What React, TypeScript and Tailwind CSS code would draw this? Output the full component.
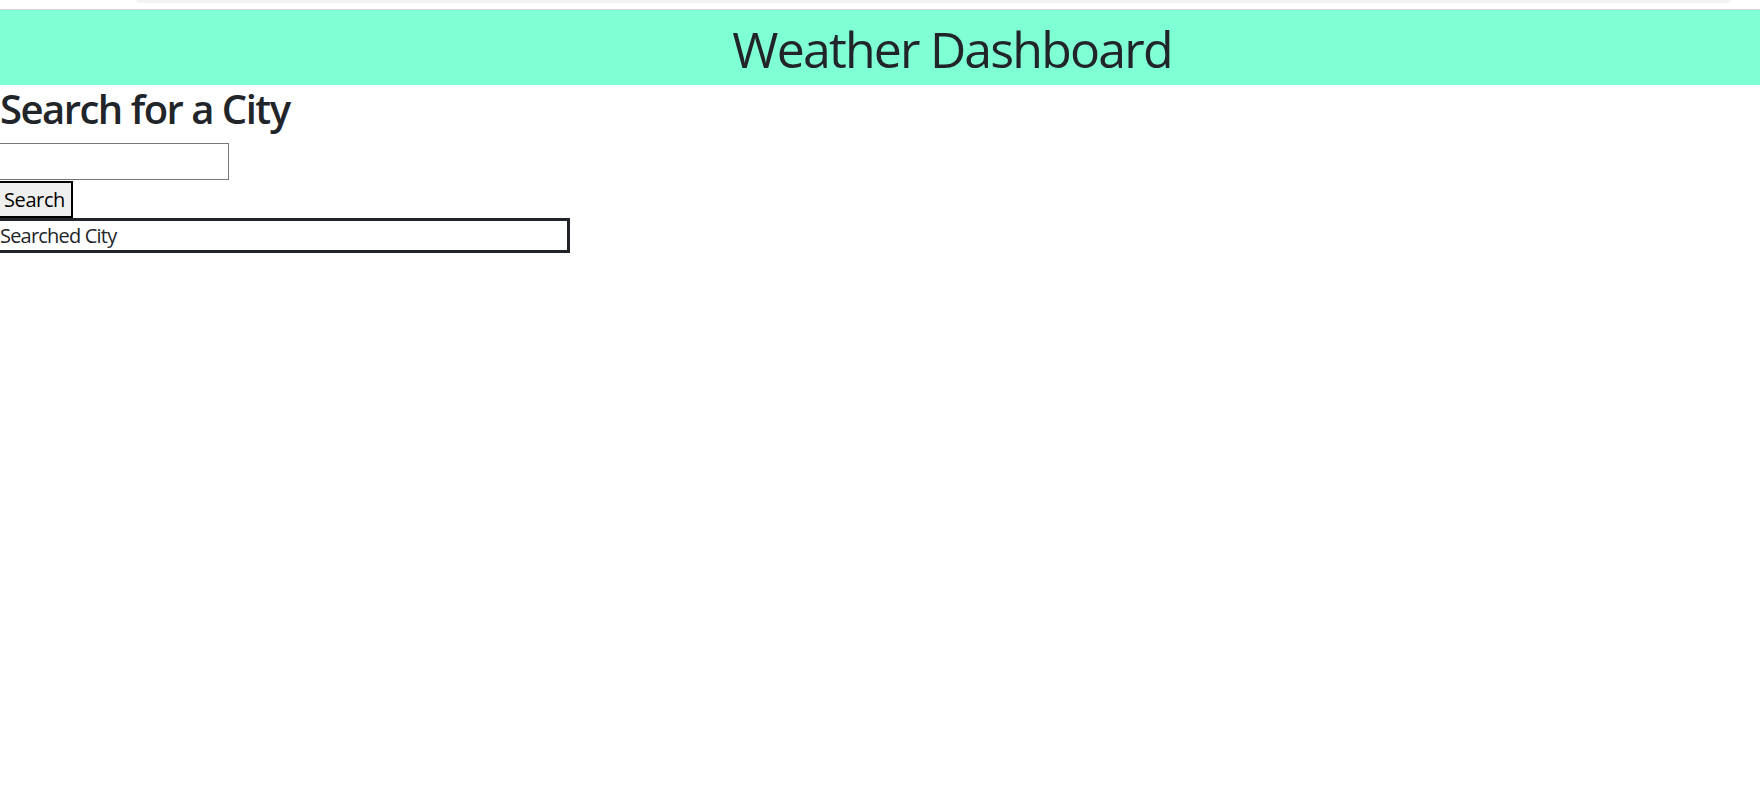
import React from 'react';

const font = { fontFamily: '"Open Sans", "Noto Sans", sans-serif' };

export default function App() {
  return (
    <div className="min-h-screen w-full bg-white text-[#212529] overflow-hidden" style={font}>
      {/* Browser chrome remnant */}
      <div className="h-[9px] w-full">
        <div className="ml-[137px] w-[1593px] h-[3px] rounded-b-xl bg-[#f1f2f4]" />
      </div>
      <div className="h-px w-full bg-[#d6d6d6]" />

      {/* Header */}
      <header className="h-[75px] w-full bg-[#7fffd4] pl-[144px] flex items-center justify-center">
        <h1 className="text-[50px] leading-none font-normal tracking-[-1.8px] pt-[2px]">Weather Dashboard</h1>
      </header>

      {/* Search column */}
      <section className="flex flex-col items-start">
        <h2 className="text-[40px] leading-[48px] font-semibold mb-[10px] tracking-[-1.5px]">Search for a City</h2>
        <input
          type="text"
          className="w-[229px] h-[37px] border border-l-0 border-[#767676] bg-white outline-none px-1 text-[20px]"
        />
        <button className="h-[37px] w-[73px] mt-px border-2 border-l-0 border-black bg-[#efefef] text-[20px] leading-none text-black text-left pl-[4px] tracking-[-0.4px]">
          Search
        </button>
        <div className="w-[570px] h-[35px] border-[3px] border-l-0 border-[#212529] text-[20px] leading-[29px] tracking-[-0.8px]">
          Searched City
        </div>
      </section>
    </div>
  );
}
